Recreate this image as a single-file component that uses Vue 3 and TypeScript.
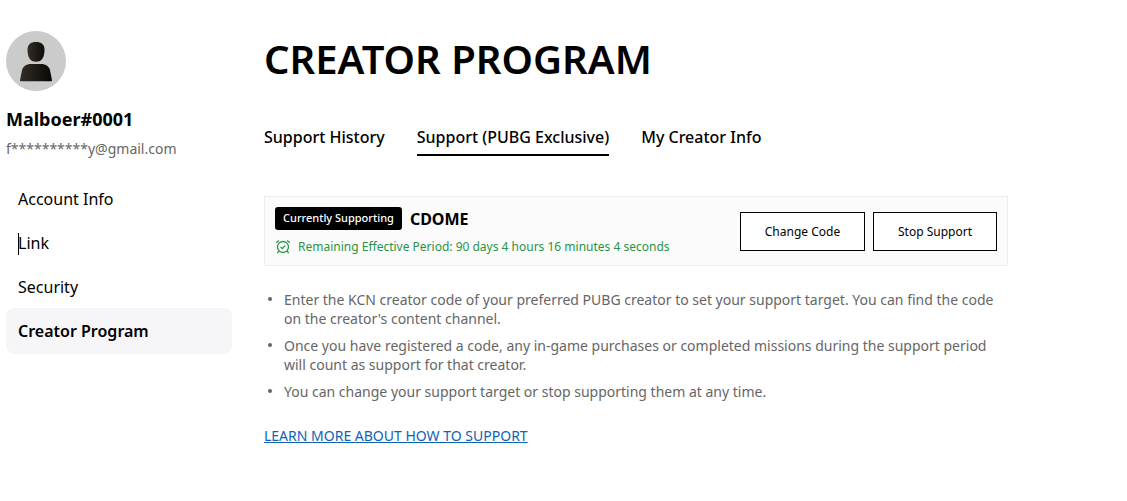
<script setup lang="ts">
const menu: string[] = ['Account Info', 'Link', 'Security', 'Creator Program']
const tabs: string[] = ['Support History', 'Support (PUBG Exclusive)', 'My Creator Info']
</script>

<template>
  <div class="page">
    <aside class="side">
      <svg class="avatar" width="60" height="60" viewBox="0 0 60 60">
        <defs>
          <linearGradient id="head" x1="0" x2="1"><stop offset="0" stop-color="#352d26" /><stop offset="1" stop-color="#0e0b09" /></linearGradient>
          <linearGradient id="body" x1="0" x2="1"><stop offset="0" stop-color="#352d26" /><stop offset="1" stop-color="#080706" /></linearGradient>
        </defs>
        <circle cx="30" cy="30" r="30" fill="#cbcbcb" />
        <path fill="url(#head)" d="M30 11c5.500 0 8.500 2.500 8.500 7.500 0 7.500-2.500 12.300-8.500 12.300s-8.500-4.800-8.500-12.300c0-5 3-7.500 8.500-7.500z" />
        <path fill="url(#body)" d="M25.500 33h9c5.800 0 8.500 2.400 9.600 6.500l1.900 9.800q.1.900-.8.900H14.800q-.9 0-.8-.9l1.900-9.800c1.100-4.100 3.800-6.500 9.600-6.500z" />
      </svg>
      <div class="name">Malboer#0001</div>
      <div class="mail">f**********y@gmail.com</div>
      <nav class="menu">
        <a v-for="item in menu" :key="item" :class="{ active: item === 'Creator Program' }"><i v-if="item === 'Link'" class="caret" />{{ item }}</a>
      </nav>
    </aside>
    <main class="main">
      <h1>CREATOR PROGRAM</h1>
      <div class="tabs">
        <a v-for="(tab, i) in tabs" :key="tab" :class="{ active: i === 1 }">{{ tab }}</a>
      </div>
      <section class="card">
        <div class="info">
          <div class="top"><span class="badge">Currently Supporting</span><b>CDOME</b></div>
          <div class="period">
            <svg width="16" height="16" viewBox="0 0 16 16" fill="none" stroke="#2b9348" stroke-width="1.300">
              <circle cx="8" cy="8" r="5.500" /><path d="M1.200 3.700 3.900 1.400M14.800 3.700 12.100 1.400M4.100 12 2.300 14M11.900 12 13.700 14M5.600 7.900l1.700 1.700 3-3.200" />
            </svg>
            <span>Remaining Effective Period: 90 days 4 hours 16 minutes 4 seconds</span>
          </div>
        </div>
        <button>Change Code</button>
        <button class="stop">Stop Support</button>
      </section>
      <ul>
        <li>Enter the KCN creator code of your preferred PUBG creator to set your support target. You can find the code<br />on the creator's content channel.</li>
        <li>Once you have registered a code, any in-game purchases or completed missions during the support period<br />will count as support for that creator.</li>
        <li>You can change your support target or stop supporting them at any time.</li>
      </ul>
      <a class="more">LEARN MORE ABOUT HOW TO SUPPORT</a>
    </main>
  </div>
</template>

<style>
body { margin: 0; background: #fff; }
</style>

<style scoped>
.page { display: flex; gap: 32px; width: 1127px; height: 501px; padding-left: 6px; box-sizing: border-box; overflow: hidden; font-family: 'Noto Sans', sans-serif; color: #000; }
.side { width: 226px; padding-top: 31px; }
.avatar { display: block; }
.name { margin-top: 16px; font-size: 18px; line-height: 25px; font-weight: 700; }
.mail { margin-top: 7px; font-size: 14px; line-height: 20px; color: #666; }
.menu { margin-top: 18px; }
.menu a { display: block; position: relative; height: 44px; line-height: 44px; padding-left: 12px; font-size: 16px; }
.menu a.active { height: 46px; line-height: 46px; margin-top: -1px; background: #f6f6f9; border-radius: 8px; font-weight: 600; }
.caret { position: absolute; left: 12px; top: 12px; width: 1px; height: 22px; background: #000; }
.main { width: 744px; }
h1 { margin: 31px 0 0; font-size: 40px; line-height: 56px; font-weight: 600; white-space: nowrap; }
.tabs { display: flex; gap: 32px; margin-top: 39px; font-size: 16px; line-height: 22px; font-weight: 500; white-space: nowrap; }
.tabs a { height: 28px; border-bottom: 2px solid transparent; }
.tabs a.active { border-color: #000; }
.card { display: flex; align-items: center; gap: 8px; box-sizing: border-box; height: 70px; margin-top: 40px; padding: 0 10px; background: #fbfbfb; border: 1px solid #eee; white-space: nowrap; }
.info { flex: 1; padding-top: 1px; }
.top { display: flex; align-items: center; gap: 8px; height: 24px; font-size: 16px; }
.top b { font-weight: 700; }
.badge { height: 23px; line-height: 22px; padding: 0 8px; border-radius: 3px; background: #000; color: #fff; font-size: 11px; font-weight: 500; }
.period { display: flex; align-items: center; gap: 7px; height: 20px; margin-top: 6px; font-size: 12px; color: #2b9348; }
button { width: 125px; height: 39px; padding: 0; border: 1px solid #000; background: #fff; color: #000; font: 400 12px 'Noto Sans', sans-serif; }
.stop { width: 124px; }
ul { list-style: none; margin: 24px 0 0; padding: 0; font-size: 14px; line-height: 19px; color: #666; white-space: nowrap; }
li { position: relative; padding-left: 20px; margin-bottom: 8px; }
li::before { content: ''; position: absolute; left: 4px; top: 7px; width: 4px; height: 4px; border-radius: 50%; background: #666; }
.more { display: inline-block; margin-top: 17px; font-size: 14px; line-height: 20px; color: #0f62b8; text-decoration: underline; }
</style>
